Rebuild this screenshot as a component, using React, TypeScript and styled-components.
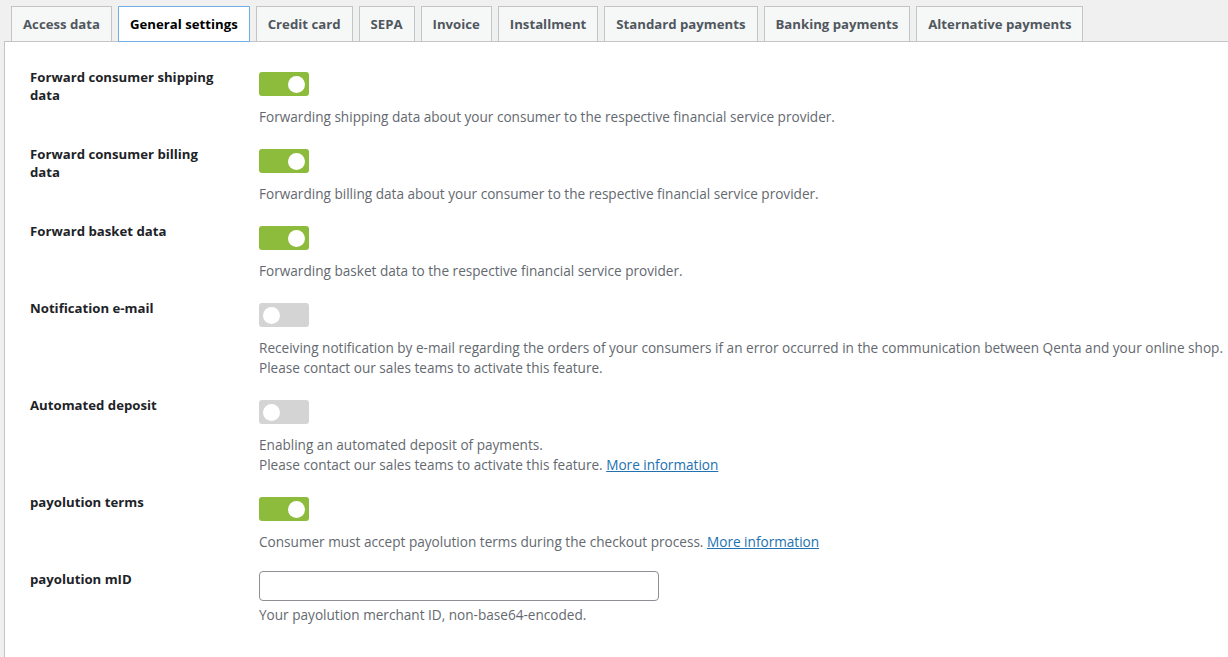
import React from "react";
import styled, { createGlobalStyle } from "styled-components";

const Global = createGlobalStyle`
  html, body { margin: 0; padding: 0; background: #f0f0f1; overflow: hidden; }
  body { font-family: "Open Sans", "Liberation Sans", sans-serif; }
  * { box-sizing: border-box; }
`;

const Page = styled.div`
  width: 1228px;
  height: 680px;
  padding-left: 4px;
  display: flex;
  flex-direction: column;
`;

const TabBar = styled.nav`
  display: flex;
  gap: 6px;
  padding: 6px 0 0 7px;
  margin-bottom: -1px;
  position: relative;
  z-index: 1;
`;

const Tab = styled.a<{ $active?: boolean }>`
  display: block;
  height: 36px;
  padding: 0 11px;
  line-height: 34px;
  font-size: 13.2px;
  font-weight: 700;
  text-decoration: none;
  white-space: nowrap;
  color: ${(p) => (p.$active ? "#000" : "#50575e")};
  background: ${(p) => (p.$active ? "#fff" : "#f6f7f7")};
  border: 1px solid ${(p) => (p.$active ? "#72aee6" : "#c3c4c7")};
`;

const Panel = styled.section`
  flex: 1;
  width: calc(100% + 20px);
  background: #fff;
  border: 1px solid #c3c4c7;
  border-right: none;
  padding: 26px 0 0 25px;
`;

const Row = styled.div`
  display: grid;
  grid-template-columns: 229px 1fr;
  padding-bottom: 18px;
`;

const Label = styled.div`
  font-size: 13.2px;
  font-weight: 700;
  line-height: 18px;
  color: #1d2327;
  width: 190px;
`;

const Field = styled.div<{ $offset?: number }>`
  padding-top: ${(p) => p.$offset ?? 4}px;
  display: flex;
  flex-direction: column;
  align-items: flex-start;
`;

const Toggle = styled.span<{ $on?: boolean }>`
  display: flex;
  align-items: center;
  justify-content: ${(p) => (p.$on ? "flex-end" : "flex-start")};
  width: 50px;
  height: 24px;
  padding: 0 4px;
  border-radius: 3px;
  background: ${(p) => (p.$on ? "#8dbb3c" : "#d4d4d4")};
  margin-bottom: 11px;
`;

const Knob = styled.span`
  width: 17px;
  height: 17px;
  border-radius: 50%;
  background: #fff;
`;

const Description = styled.p`
  margin: 0;
  font-size: 13.6px;
  line-height: 20px;
  color: #646970;
  white-space: nowrap;
`;

const Link = styled.a`
  color: #2271b1;
  text-decoration: underline;
`;

const TextInput = styled.input`
  width: 400px;
  height: 30px;
  border: 1px solid #8c8f94;
  border-radius: 4px;
  background: #fff;
  margin: 1px 0 4px;
  padding: 0 8px;
  font: inherit;
`;

const tabs = [
  "Access data",
  "General settings",
  "Credit card",
  "SEPA",
  "Invoice",
  "Installment",
  "Standard payments",
  "Banking payments",
  "Alternative payments",
];

type Setting = {
  label: string;
  on: boolean;
  lines: React.ReactNode[];
};

const settings: Setting[] = [
  {
    label: "Forward consumer shipping data",
    on: true,
    lines: ["Forwarding shipping data about your consumer to the respective financial service provider."],
  },
  {
    label: "Forward consumer billing data",
    on: true,
    lines: ["Forwarding billing data about your consumer to the respective financial service provider."],
  },
  {
    label: "Forward basket data",
    on: true,
    lines: ["Forwarding basket data to the respective financial service provider."],
  },
  {
    label: "Notification e-mail",
    on: false,
    lines: [
      "Receiving notification by e-mail regarding the orders of your consumers if an error occurred in the communication between Qenta and your online shop.",
      "Please contact our sales teams to activate this feature.",
    ],
  },
  {
    label: "Automated deposit",
    on: false,
    lines: [
      "Enabling an automated deposit of payments.",
      <>
        Please contact our sales teams to activate this feature. <Link href="#">More information</Link>
      </>,
    ],
  },
  {
    label: "payolution terms",
    on: true,
    lines: [
      <>
        Consumer must accept payolution terms during the checkout process. <Link href="#">More information</Link>
      </>,
    ],
  },
];

export default function App() {
  return (
    <>
      <Global />
      <Page>
        <TabBar>
          {tabs.map((t) => (
            <Tab key={t} href="#" $active={t === "General settings"}>
              {t}
            </Tab>
          ))}
        </TabBar>
        <Panel>
          {settings.map((s) => (
            <Row key={s.label}>
              <Label>{s.label}</Label>
              <Field>
                <Toggle $on={s.on}>
                  <Knob />
                </Toggle>
                {s.lines.map((l, i) => (
                  <Description key={i}>{l}</Description>
                ))}
              </Field>
            </Row>
          ))}
          <Row>
            <Label>payolution mID</Label>
            <Field $offset={0}>
              <TextInput type="text" />
              <Description>Your payolution merchant ID, non-base64-encoded.</Description>
            </Field>
          </Row>
        </Panel>
      </Page>
    </>
  );
}
